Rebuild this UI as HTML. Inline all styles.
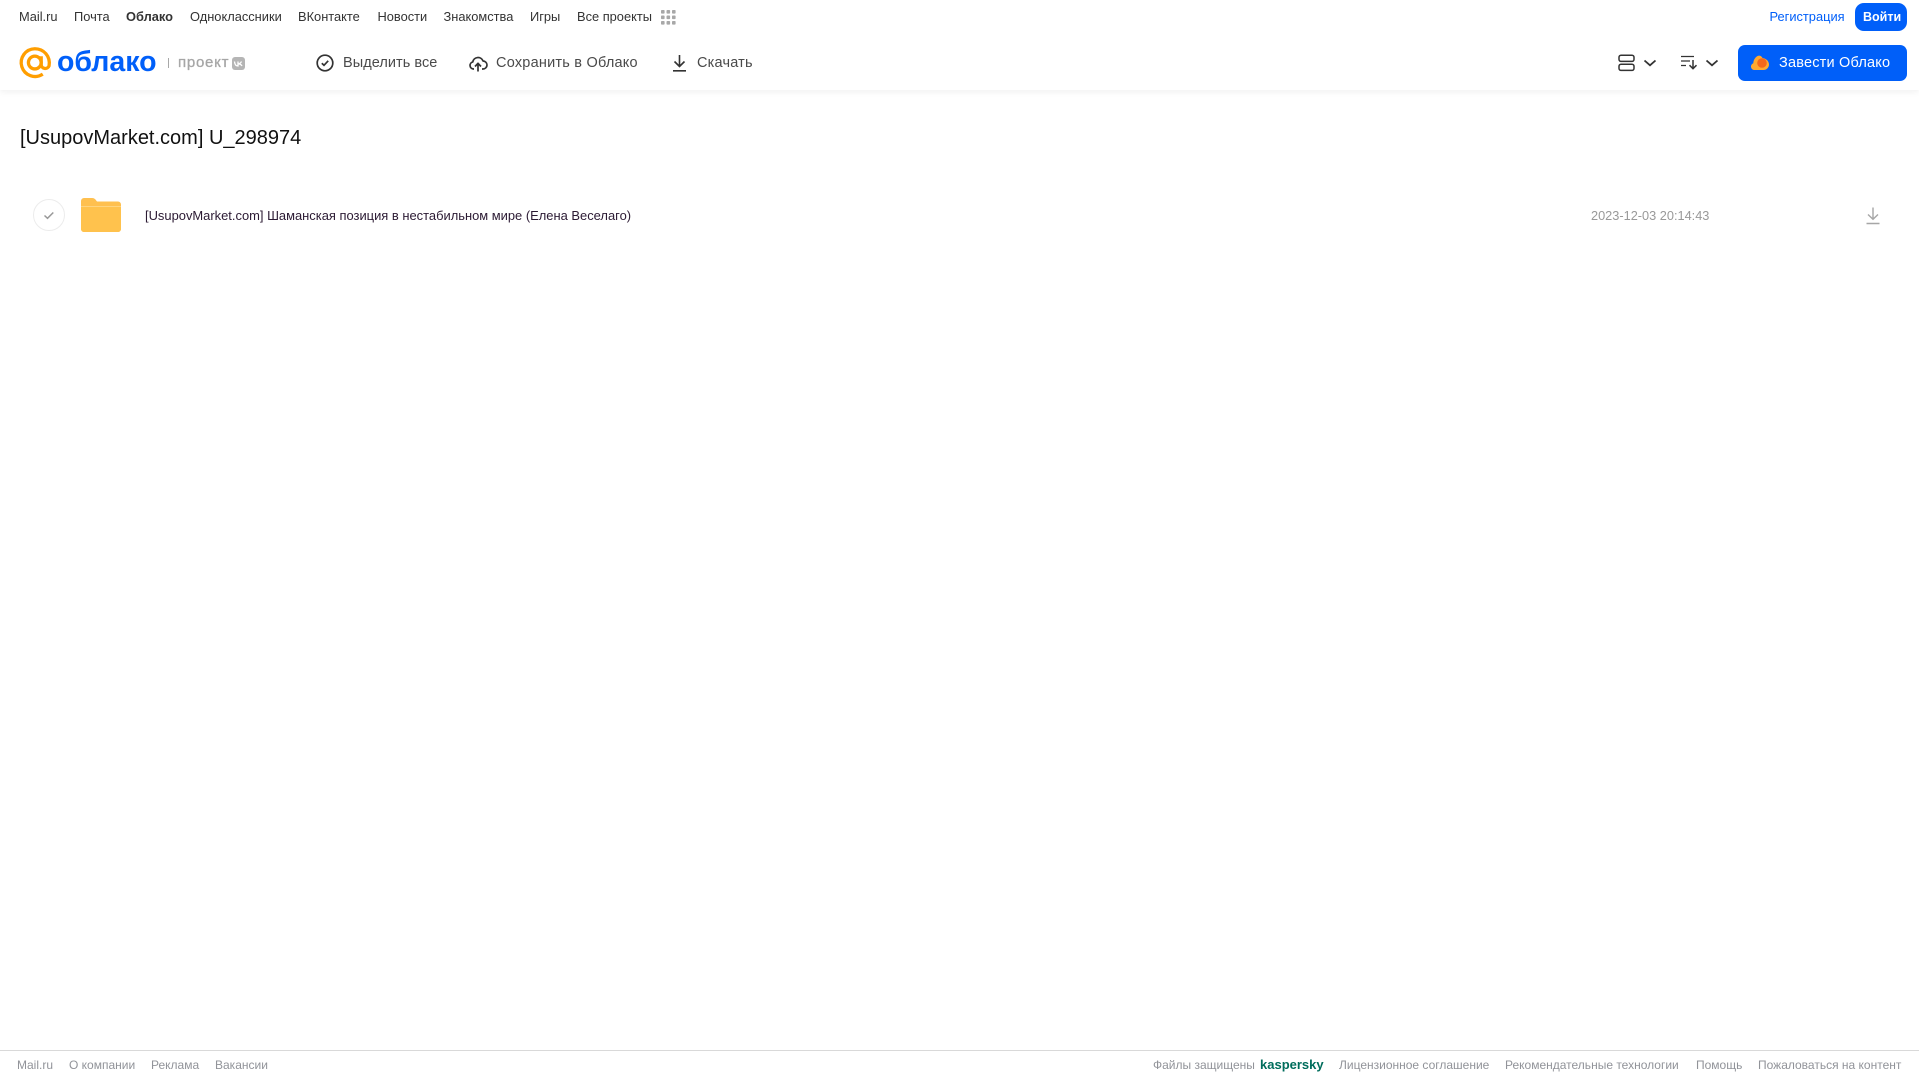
<!DOCTYPE html>
<html lang="ru"><head><meta charset="utf-8"><title>Облако</title>
<style>
html,body{margin:0;padding:0;background:#fff;}
body{width:1919px;height:1079px;position:relative;overflow:hidden;font-family:"Liberation Sans",Arial,sans-serif;}
.t{position:absolute;white-space:nowrap;line-height:20px;}
.n{top:7px;font-size:12.85px;color:#333;}
.a{top:53px;font-size:14.5px;color:#4a4a4a;letter-spacing:.2px;}
.f{top:1055px;font-size:12px;color:#919399;}
svg{position:absolute;overflow:visible;}
#hd{position:absolute;left:0;top:0;width:1919px;height:90px;background:#fff;box-shadow:0 2px 6px rgba(0,0,0,.06);}
#fl{position:absolute;left:0;top:1050px;width:1919px;height:1px;background:#d9d9d9;}
</style></head><body>
<div id="hd"></div>
<span class="t n" style="left:19px">Mail.ru</span>
<span class="t n" style="left:74px">Почта</span>
<span class="t n" style="left:126px;font-weight:bold">Облако</span>
<span class="t n" style="left:190px">Одноклассники</span>
<span class="t n" style="left:298px">ВКонтакте</span>
<span class="t n" style="left:377.500px">Новости</span>
<span class="t n" style="left:443.500px">Знакомства</span>
<span class="t n" style="left:530px">Игры</span>
<span class="t n" style="left:577px">Все проекты</span>
<svg style="left:661px;top:10px" width="15" height="15" fill="#a8a8a8"><rect x="0" y="0" width="3.6" height="3.6" rx=".8"/><rect x="5.5" y="0" width="3.6" height="3.6" rx=".8"/><rect x="11" y="0" width="3.6" height="3.6" rx=".8"/><rect x="0" y="5.5" width="3.6" height="3.6" rx=".8"/><rect x="5.5" y="5.5" width="3.6" height="3.6" rx=".8"/><rect x="11" y="5.5" width="3.6" height="3.6" rx=".8"/><rect x="0" y="11" width="3.6" height="3.6" rx=".8"/><rect x="5.5" y="11" width="3.6" height="3.6" rx=".8"/><rect x="11" y="11" width="3.6" height="3.6" rx=".8"/></svg>
<span class="t n" style="left:1769.500px;color:#005ff9">Регистрация</span>
<div style="position:absolute;left:1855px;top:3px;width:52px;height:28px;background:#005ff9;border-radius:9px;"></div>
<span class="t n" style="left:1863px;color:#fff;font-weight:bold;font-size:12.500px">Войти</span>

<svg style="left:19px;top:47px" width="32" height="32" viewBox="0 0 33 33" fill="none" stroke="#ff9e00" stroke-width="3.4"><circle cx="16.3" cy="16" r="6.6"/><path d="M22.9 9.5V18a4.2 4.2 0 0 0 8.1 1.5C32.7 9.5 25.500 1.800 16.300 1.800A14.300 14.300 0 1 0 24.500 28"/></svg>
<span class="t" style="left:57px;top:44px;font-size:28.500px;line-height:36px;color:#005ff9;font-weight:bold;">облако</span>
<div style="position:absolute;left:168px;top:58px;width:1px;height:10px;background:#a8a8a8"></div>
<span class="t" style="left:178px;top:53px;font-size:15px;color:#a6a6a6;letter-spacing:.75px;-webkit-text-stroke:.3px #a6a6a6">проект</span>
<div style="position:absolute;left:232px;top:57px;width:13px;height:13px;background:#b5b5b5;border-radius:3px"></div>
<svg style="left:232px;top:57px" width="13" height="13" fill="none" stroke="#fff" stroke-width="1.300"><path d="M2.500 4.500C2.700 7.500 4 9 6 9V4.500M6 6.800C8 6.800 9 5.500 9.500 4.500M6 6.800C8 6.800 9.500 8 10 9"/></svg>

<svg style="left:316px;top:54px" width="18" height="18" fill="none" stroke="#333" stroke-width="1.700"><circle cx="9" cy="9" r="7.800"/><path d="M5.800 9.200L8 11.300L12.200 6.800"/></svg>
<span class="t a" style="left:343px;letter-spacing:.05px">Выделить все</span>
<svg style="left:469px;top:54px" width="18" height="18" fill="none" stroke="#333" stroke-width="1.700" stroke-linejoin="round"><path d="M5 15H4.500A3.600 3.600 0 0 1 3.800 7.900 5.300 5.300 0 0 1 14 7 4 4 0 0 1 14 15H13"/><path d="M9 17.500V9.500M6 12.500L9 9.300L12 12.500"/></svg>
<span class="t a" style="left:496px;letter-spacing:.22px">Сохранить в Облако</span>
<svg style="left:672px;top:54px" width="15" height="18" fill="none" stroke="#333" stroke-width="1.600"><path d="M7.500 1V12.500M2.500 7.500L7.500 12.500L12.500 7.500M1 16.800H14"/></svg>
<span class="t a" style="left:697px">Скачать</span>

<svg style="left:1618px;top:54px" width="17" height="18" fill="none" stroke="#333" stroke-width="1.500"><rect x="1" y="1.200" width="15" height="6.200" rx="2"/><rect x="1" y="10.200" width="15" height="6.200" rx="2"/></svg>
<svg style="left:1643px;top:59px" width="14" height="8" fill="none" stroke="#333" stroke-width="1.800"><path d="M1.500 1.500L7 6.300L12.500 1.500"/></svg>
<svg style="left:1681px;top:55px" width="17" height="15" fill="none" stroke="#333" stroke-width="1.200"><path d="M0 1.500H13M0 6H9M0 10.500H5"/><path d="M12 5V13.500M8.500 10.200L12 13.700L15.500 10.200" stroke-width="1.500"/></svg>
<svg style="left:1705px;top:59px" width="14" height="8" fill="none" stroke="#333" stroke-width="1.800"><path d="M1.500 1.500L7 6.300L12.500 1.500"/></svg>

<div style="position:absolute;left:1738px;top:45px;width:169px;height:36px;background:#005ff9;border-radius:7px;"></div>
<svg style="left:1751px;top:55px" width="18" height="15"><path d="M3.500 15A3.500 3.500 0 0 1 2.300 8.200C2.500 5 4 2.500 6.500 1 8.500 0 10.500 1 11.500 3 15 3.500 18 6 18 9.500A5.500 5.500 0 0 1 12.500 15Z" fill="#ffa930"/><circle cx="11" cy="8" r="4.800" fill="#f4681c"/></svg>
<span class="t a" style="left:1779px;color:#fff">Завести Облако</span>

<span class="t" style="left:20px;top:126px;font-size:20px;line-height:24px;color:#111">[UsupovMarket.com] U_298974</span>

<svg style="left:32px;top:198px" width="34" height="34" fill="none"><circle cx="17" cy="17" r="15.500" stroke="#ececec" stroke-width="1"/><path d="M12.500 17.500L15.500 20.300L21.300 14.500" stroke="#999" stroke-width="1.500"/></svg>
<svg style="left:81px;top:198px" width="41" height="35"><path d="M3 0H11C13 0 14 .8 15 2.300L16 3.500H37A3 3 0 0 1 40 6.500V31A3 3 0 0 1 37 34H3A3 3 0 0 1 0 31V3A3 3 0 0 1 3 0Z" fill="#ffc04f"/><path d="M0 8H40V31A3 3 0 0 1 37 34H3A3 3 0 0 1 0 31Z" fill="#ffc24d"/><path d="M0 8.500H40" stroke="#ffd47f" stroke-width="1"/></svg>
<span class="t" style="left:145px;top:206px;font-size:12.930px;color:#2b1a33">[UsupovMarket.com] Шаманская позиция в нестабильном мире (Елена Веселаго)</span>
<span class="t" style="left:1591px;top:206px;font-size:12.750px;color:#999">2023-12-03 20:14:43</span>
<svg style="left:1866px;top:207px" width="14" height="18" fill="none" stroke="#a6a6a6" stroke-width="1.400"><path d="M7 .5V12M2 7.500L7 12.300L12 7.500M.5 16.500H13.500"/></svg>

<div id="fl"></div>
<span class="t f" style="left:17px">Mail.ru</span>
<span class="t f" style="left:69px">О компании</span>
<span class="t f" style="left:151px">Реклама</span>
<span class="t f" style="left:215px">Вакансии</span>
<span class="t f" style="left:1153px">Файлы защищены</span>
<span class="t f" style="left:1260px;color:#006d5c;font-weight:bold;font-size:13px">kaspersky</span>
<span class="t f" style="left:1339px">Лицензионное соглашение</span>
<span class="t f" style="left:1505px">Рекомендательные технологии</span>
<span class="t f" style="left:1696px">Помощь</span>
<span class="t f" style="left:1758px">Пожаловаться на контент</span>
</body></html>
